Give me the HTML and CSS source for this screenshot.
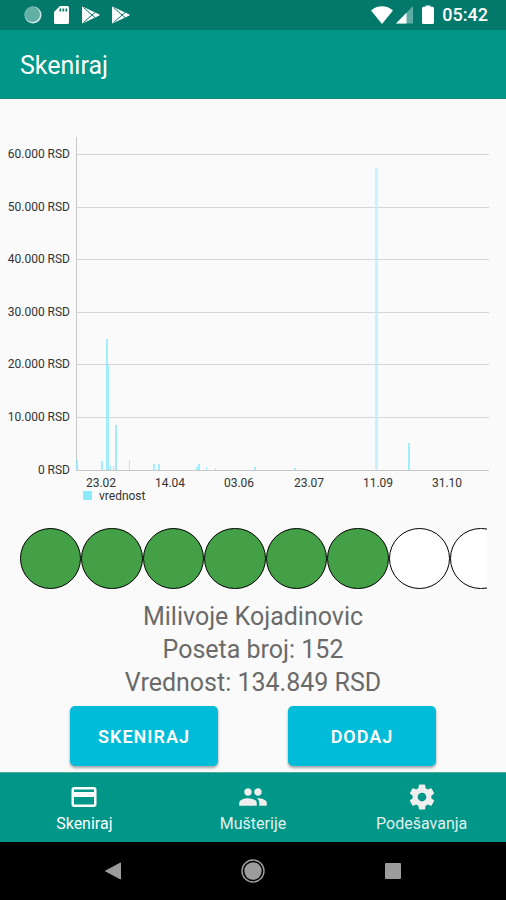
FILE: index.html
```html
<!DOCTYPE html>
<html lang="sr-Latn">
<head>
<meta charset="utf-8">
<meta name="viewport" content="width=device-width, initial-scale=1">
<title>Skeniraj</title>
<link rel="stylesheet" href="styles.css">
</head>
<body>
<div class="screen">
  <div class="status-bar">
    <div class="status-left">
      <svg width="18" height="18" viewBox="0 0 18 18"><circle cx="9" cy="9" r="8.5" fill="#d3ebe8"/><circle cx="8.4" cy="8.4" r="7.7" fill="#62afa5"/></svg>
      <svg width="16" height="20" viewBox="0 0 16 20"><path d="M6 1h7.5A1.5 1.5 0 0 1 15 2.500v15a1.500 1.500 0 0 1-1.500 1.500h-12A1.500 1.500 0 0 1 0 17.500V7z" fill="#fff"/><path d="M5.500 3.500h1.700v3H5.500zm3 0h1.700v3H8.500zm3 0h1.700v3h-1.700z" fill="#03796b"/></svg>
      <svg width="18" height="18" viewBox="0 0 18 18"><path d="M.5 1v16l16.800-8z" fill="#fff" stroke="#fff" stroke-linejoin="round"/><path d="M1.500 1.500L13 11.500M1.500 16.500L13 6.500" stroke="#03796b" fill="none"/></svg>
      <svg width="18" height="18" viewBox="0 0 18 18"><path d="M.5 1v16l16.800-8z" fill="#fff" stroke="#fff" stroke-linejoin="round"/><path d="M1.500 1.500L13 11.500M1.500 16.500L13 6.500" stroke="#03796b" fill="none"/></svg>
    </div>
    <div class="status-right">
      <svg width="22" height="20" viewBox="0 0 22 20"><path d="M11 19L0 5.500C6-.2 16-.2 22 5.500z" fill="#fff"/></svg>
      <svg width="18" height="18" viewBox="0 0 18 18"><path d="M0 17.500L17 0v17.500z" fill="#5dada3"/><path d="M0 17.500L10.500 6.700v10.800z" fill="#fff"/></svg>
      <svg class="battery" width="12" height="20" viewBox="0 0 12 20"><path d="M3.500 1.800V.5h5v1.300h2A1.500 1.500 0 0 1 12 3.300v14.200a1.500 1.500 0 0 1-1.500 1.500h-9A1.500 1.500 0 0 1 0 17.500V3.300a1.500 1.500 0 0 1 1.500-1.500z" fill="#fff"/></svg>
      <time class="clock">05:42</time>
    </div>
  </div>
  <header class="app-bar"><h1>Skeniraj</h1></header>
  <main>
    <svg class="chart" viewBox="0 1 506 411" role="img" aria-label="vrednost">
      <path class="grid" d="M76 56.500H489M76 109.500H489M76 161.500H489M76 214.500H489M76 266.500H489M76 319.500H489"/>
      <path class="axis" d="M76.500 39V372M76 372.500H489"/>
      <g class="bars">
        <path d="M76 362h2v10h-2zM101 363h2v9h-2zM106 241h2v131h-2zM107 267h2v105h-2zM109 370h1v2h-1zM110 367h1v5h-1zM113 368h1v4h-1zM115 327h2v45h-2zM129 362h1v10h-1zM153 366h2v6h-2zM158 366h2v6h-2zM196 369h2v3h-2zM198 366h2v6h-2zM206 369h1v3h-1zM215 370h1v2h-1zM254 369h2v3h-2zM294 370h2v2h-2z"/>
        <path d="M408 345h2v27h-2z"/>
        <path class="wide" d="M375 70h3v302h-3z"/>
      </g>
      <g class="y-labels">
        <text x="70" y="60">60.000 RSD</text>
        <text x="70" y="113">50.000 RSD</text>
        <text x="70" y="165">40.000 RSD</text>
        <text x="70" y="218">30.000 RSD</text>
        <text x="70" y="270">20.000 RSD</text>
        <text x="70" y="323">10.000 RSD</text>
        <text x="70" y="376">0 RSD</text>
      </g>
      <g class="x-labels">
        <text x="101" y="389">23.02</text>
        <text x="170" y="389">14.04</text>
        <text x="239" y="389">03.06</text>
        <text x="309" y="389">23.07</text>
        <text x="378" y="389">11.09</text>
        <text x="447" y="389">31.10</text>
      </g>
      <path class="key" d="M83 393h9v9h-9z"/>
      <text x="99" y="402">vrednost</text>
    </svg>
    <ul class="visits">
      <li class="done"></li><li class="done"></li><li class="done"></li><li class="done"></li><li class="done"></li><li class="done"></li><li></li><li></li>
    </ul>
    <div class="customer">
      <p>Milivoje Kojadinovic</p>
      <p>Poseta broj: 152</p>
      <p>Vrednost: 134.849 RSD</p>
    </div>
    <div class="actions">
      <button type="button">SKENIRAJ</button>
      <button type="button">DODAJ</button>
    </div>
  </main>
  <nav class="tabs">
    <a class="active" href="#skeniraj">
      <svg viewBox="0 0 24 24"><path d="M20 4H4c-1.110 0-1.990.89-1.990 2L2 18c0 1.110.89 2 2 2h16c1.110 0 2-.89 2-2V6c0-1.110-.89-2-2-2zm0 14H4v-6h16v6zm0-10H4V6h16v2z"/></svg>
      <span>Skeniraj</span>
    </a>
    <a href="#musterije">
      <svg viewBox="0 0 24 24"><path d="M16 11c1.660 0 2.990-1.340 2.990-3S17.660 5 16 5s-3 1.340-3 3 1.340 3 3 3zm-8 0c1.660 0 2.990-1.340 2.990-3S9.660 5 8 5 5 6.340 5 8s1.340 3 3 3zm0 2c-2.330 0-7 1.170-7 3.500V19h14v-2.500c0-2.330-4.670-3.500-7-3.500zm8 0c-.29 0-.62.020-.97.050 1.160.84 1.970 1.970 1.970 3.450V19h6v-2.500c0-2.330-4.670-3.500-7-3.500z"/></svg>
      <span>Mušterije</span>
    </a>
    <a href="#podesavanja">
      <svg viewBox="0 0 24 24"><path d="M19.430 12.980c.04-.32.07-.64.07-.98s-.03-.66-.07-.98l2.110-1.650c.19-.15.24-.42.12-.64l-2-3.460c-.12-.22-.39-.3-.61-.22l-2.490 1c-.52-.4-1.080-.73-1.690-.98l-.38-2.650C14.460 2.180 14.250 2 14 2h-4c-.25 0-.46.18-.49.42l-.38 2.650c-.61.25-1.170.59-1.690.98l-2.490-1c-.23-.09-.49 0-.61.22l-2 3.460c-.13.22-.07.49.12.64l2.110 1.650c-.04.32-.07.65-.07.98s.03.66.07.98l-2.110 1.650c-.19.15-.24.42-.12.64l2 3.460c.12.22.39.3.61.22l2.490-1c.52.4 1.080.73 1.690.98l.38 2.650c.03.24.24.42.49.42h4c.25 0 .46-.18.49-.42l.38-2.650c.61-.25 1.170-.59 1.690-.98l2.490 1c.23.09.49 0 .61-.22l2-3.460c.12-.22.07-.49-.12-.64l-2.110-1.650zM12 15.500c-1.930 0-3.500-1.570-3.500-3.500s1.570-3.500 3.500-3.500 3.500 1.570 3.500 3.500-1.570 3.500-3.500 3.500z"/></svg>
      <span>Podešavanja</span>
    </a>
  </nav>
  <div class="system-nav">
    <button type="button" aria-label="Nazad"><svg width="24" height="24" viewBox="0 0 24 24"><path d="M4.500 12L19.500 4v16z" fill="#9c9c9c" stroke="#9c9c9c" stroke-linejoin="round"/></svg></button>
    <button type="button" aria-label="Početni ekran"><svg width="24" height="24" viewBox="0 0 24 24"><circle cx="12" cy="12" r="11" fill="none" stroke="#a0a0a0" stroke-width="1.400"/><circle cx="12" cy="12" r="8.700" fill="#9c9c9c"/></svg></button>
    <button type="button" aria-label="Pregled"><svg width="24" height="24" viewBox="0 0 24 24"><rect x="4" y="4" width="16" height="16" rx="1" fill="#9c9c9c"/></svg></button>
  </div>
</div>
</body>
</html>
```
FILE: styles.css
```css
* { box-sizing: border-box; }

body {
  margin: 0;
  font-family: Roboto, "Liberation Sans", sans-serif;
  background: #fafafa;
}

.screen {
  display: flex;
  flex-direction: column;
  min-height: 100vh;
}

.status-bar {
  display: flex;
  justify-content: space-between;
  align-items: center;
  height: 30px;
  padding: 0 18px 0 24px;
  background: #03796b;
}

.status-left, .status-right { display: flex; align-items: center; }
.status-left { gap: 12px; }
.status-right { gap: 3px; }
.battery { margin: 0 5px; }
.clock { color: #fff; font-size: 18px; font-weight: 500; line-height: 30px; }

.app-bar {
  display: flex;
  align-items: center;
  height: 69px;
  padding: 4px 20px 0;
  background: #009688;
  border-bottom: 1px solid #1a8177;
}

h1 { margin: 0; color: #fff; font-size: 25px; font-weight: 400; line-height: 32px; }

main { flex: 1; }

.chart { display: block; width: 100%; height: auto; }
.chart text { font-size: 12px; fill: #333; }
.grid, .axis { fill: none; stroke: #d6d6d6; }
.axis { stroke: #c8c8c8; }
.bars { fill: #8ceafd; opacity: .8; }
.wide { fill: #bdf0fa; }
.key { fill: #8ceafd; }
.y-labels { text-anchor: end; }
.x-labels { text-anchor: middle; }

.visits {
  display: flex;
  margin: 18px 19px 0 20px;
  padding: 0;
  list-style: none;
  overflow: hidden;
}

.visits li {
  flex: none;
  width: calc(100% / 7.6);
  aspect-ratio: 1;
  border: 1px solid #000;
  border-radius: 50%;
  background: #fff;
}

.visits .done { background: #43a047; }

.customer { margin-top: 11px; text-align: center; color: #6a6a6a; font-size: 25px; line-height: 33px; }
.customer p { margin: 0; }

.actions { display: flex; justify-content: space-between; padding: 7px 70px 5px; }

.actions button {
  width: 148px;
  height: 60px;
  padding: 0;
  border: 0;
  border-radius: 5px;
  background: #00bcd9;
  box-shadow: 0 2px 3px rgba(0, 0, 0, .35);
  color: #fff;
  font: 600 18px Roboto, "Liberation Sans", sans-serif;
  letter-spacing: 1px;
}

.tabs { display: flex; height: 70px; background: #009688; border-top: 1px solid #52a79e; }

.tabs a {
  flex: 1;
  display: flex;
  flex-direction: column;
  align-items: center;
  padding-top: 9px;
  color: #e0f0ee;
  font-size: 16px;
  line-height: 20px;
  text-decoration: none;
}

.tabs svg { width: 30px; height: 30px; margin-bottom: 2px; fill: #eee; }
.tabs .active { color: #fff; }
.tabs .active svg { fill: #fff; }

.system-nav { display: flex; justify-content: center; gap: 16px; height: 58px; background: #000; }

.system-nav button {
  display: flex;
  align-items: center;
  justify-content: center;
  width: 124px;
  padding: 0;
  border: 0;
  background: none;
}
```
